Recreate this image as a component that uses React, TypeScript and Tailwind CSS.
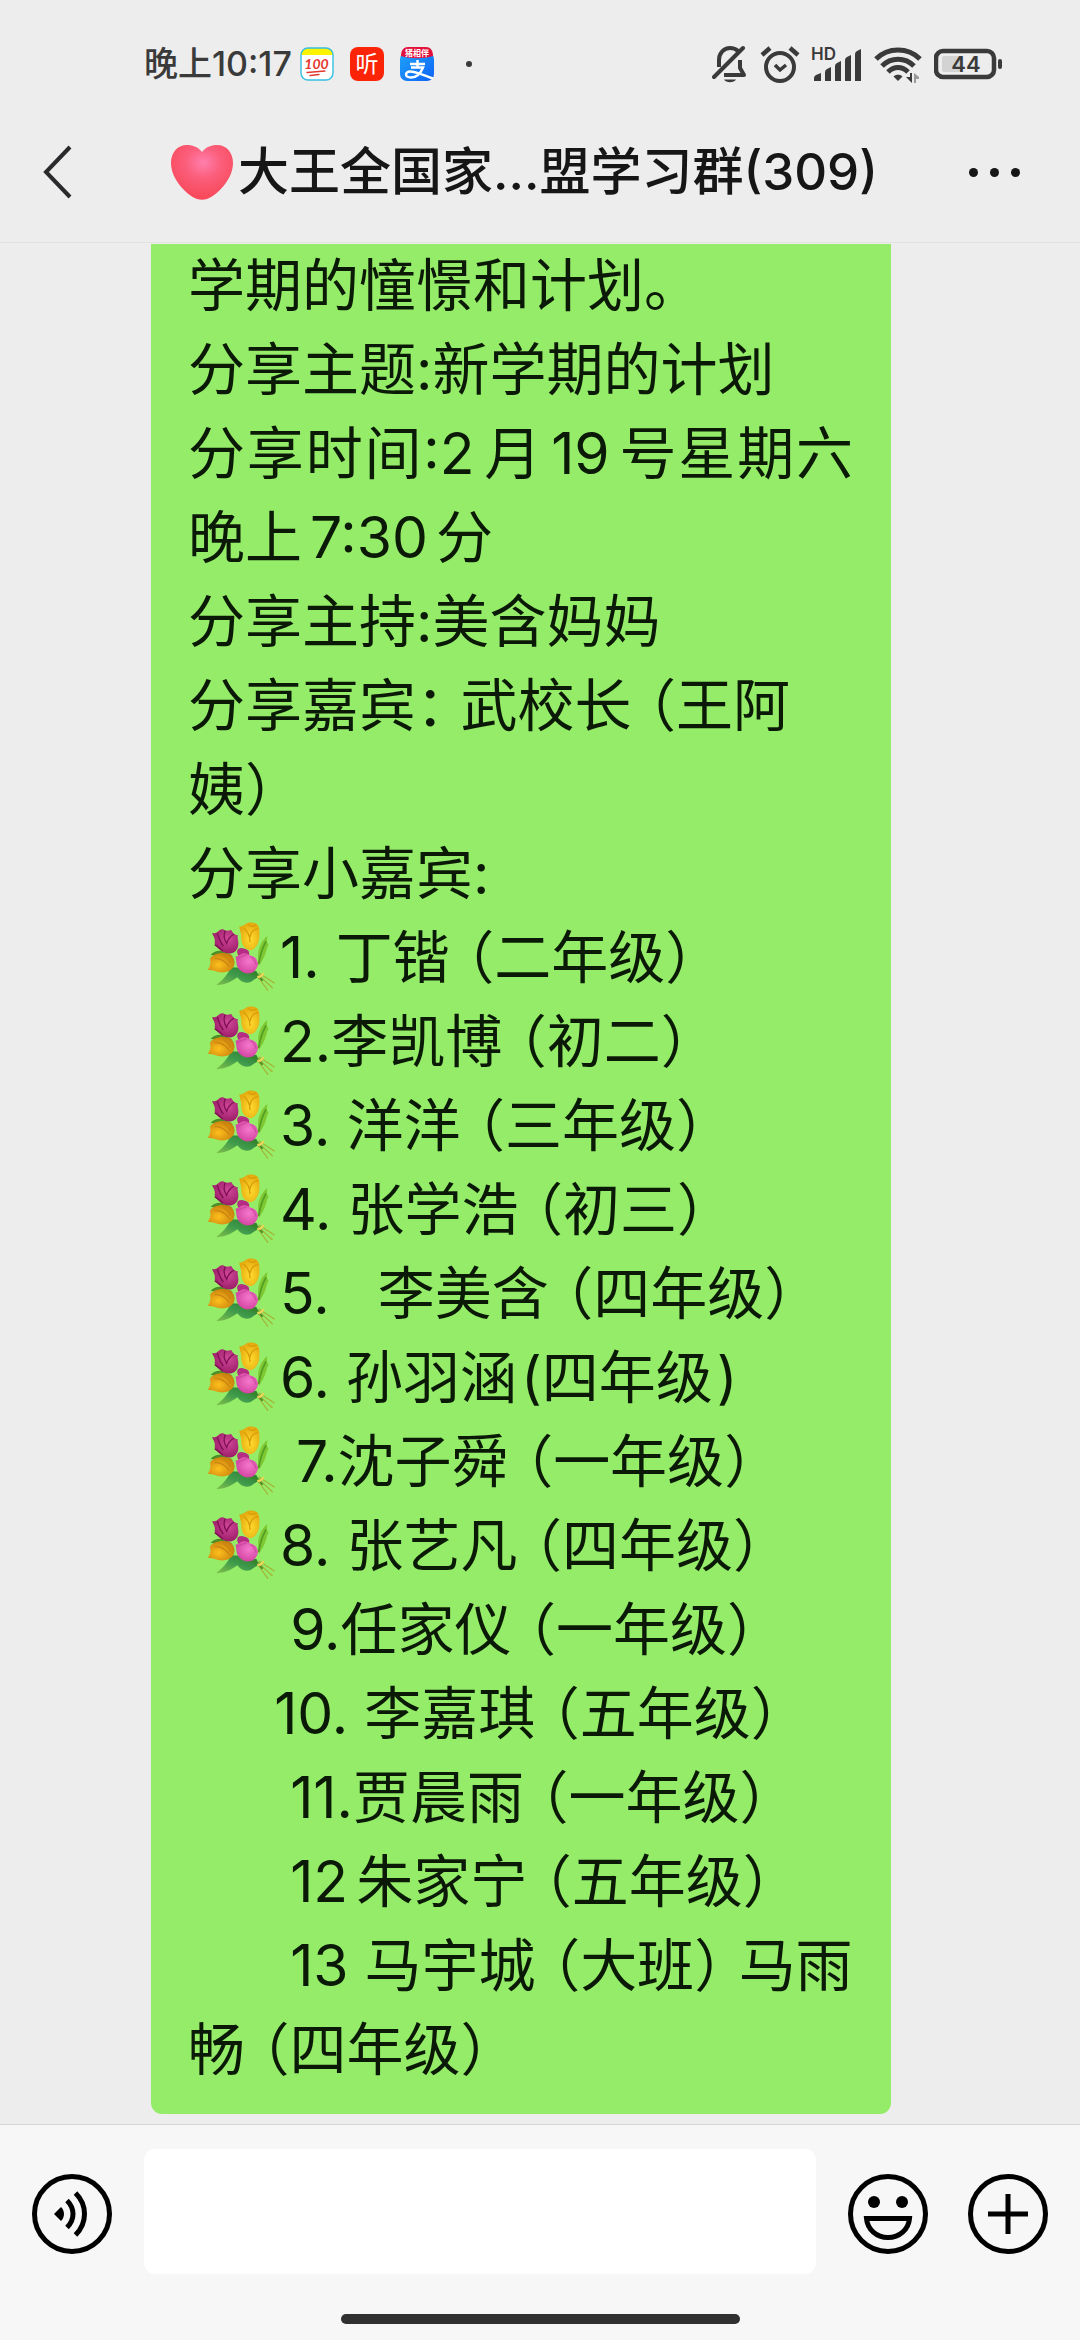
import React from "react";

const FONT = "font-[Inter,'Noto_Sans_CJK_SC',sans-serif]";

function ScoreIcon() {
  return (
    <svg viewBox="0 0 34 34" className="size-[34px] overflow-visible" aria-hidden="true">
      <rect x="1" y="1" width="32" height="32" rx="7" fill="#fff" />
      <path d="M1 8a7 7 0 0 1 7-7h18a7 7 0 0 1 7 7Z" fill="#fdf300" />
      <rect x="1" y="1" width="32" height="32" rx="7" fill="none" stroke="#35bfe0" strokeWidth="1.4" />
      <text x="16.500" y="22" textAnchor="middle" fontFamily="Lato, sans-serif" fontSize="14" fontStyle="italic" fontWeight="700" fill="#e5382c">100</text>
      <path d="M7 25.500 25 24M10 28.500 19 27.500" stroke="#e5382c" strokeWidth="1.300" fill="none" strokeLinecap="round" />
    </svg>
  );
}

function ListenIcon() {
  return (
    <svg viewBox="0 0 34 34" className="size-[34px] overflow-visible" aria-hidden="true">
      <rect width="34" height="34" rx="8" fill="#fb2407" />
      <text x="17" y="25" textAnchor="middle" fontFamily="'Noto Sans CJK SC', sans-serif" fontSize="23" fill="#fff">听</text>
    </svg>
  );
}

function PayIcon() {
  return (
    <svg viewBox="0 0 34 34" className="size-[34px] overflow-visible" aria-hidden="true">
      <defs>
        <linearGradient id="payBlue" x1="0" y1="0" x2="1" y2="1">
          <stop offset="0" stopColor="#1ea4fb" />
          <stop offset="1" stopColor="#0f62f5" />
        </linearGradient>
      </defs>
      <rect y="5" width="34" height="29" rx="7" fill="url(#payBlue)" />
      <path d="M1 9C1 3 4 0 8 0h18c4 0 7 3 7 9-9 3-23 3-32 0Z" fill="#e2103a" />
      <text x="17" y="9" textAnchor="middle" fontFamily="'Noto Sans CJK SC', sans-serif" fontSize="8" fontWeight="700" fill="#fff">猪相伴</text>
      <path d="M10 17h15M17.500 13v7M11 20.500h12c-2 5-6 10-12 10-7 0-6-6-1-6 6 0 14 4 23 7" fill="none" stroke="#fff" strokeWidth="2.400" />
    </svg>
  );
}

function StatusBar() {
  return (
    <div className="flex h-32 items-start justify-between pt-10 pr-19 pl-36 text-[#3a3a3a]">
      <div className="flex h-12 items-center">
        <span className="text-[34px] leading-12 font-medium">晚上10:17</span>
        <div className="ml-2 flex items-center gap-4">
          <ScoreIcon />
          <ListenIcon />
          <PayIcon />
        </div>
        <span className="ml-8 size-[6px] rounded-full bg-[#3a3a3a]" />
      </div>
      <div className="flex h-12 items-center gap-3">
        <svg viewBox="0 0 36 38" className="h-[38px] w-9" fill="none" stroke="currentColor" aria-label="静音">
          <path d="M7 22V15C7 8 12 3 18 3c3 0 6 1 8 3" strokeWidth="4" />
          <path d="M12 30h20l-4-7v-8" strokeWidth="4" strokeLinejoin="round" />
          <path d="M2 32 31 3" strokeWidth="4" strokeLinecap="round" />
          <path d="M12 34.500h12c-2 3.500-10 3.500-12 0Z" fill="currentColor" stroke="none" />
        </svg>
        <svg viewBox="0 0 40 38" className="h-[38px] w-10" fill="none" stroke="currentColor" strokeWidth="4" aria-label="闹钟">
          <circle cx="20" cy="22" r="14" />
          <path d="M15 20l5 5 6-5" strokeWidth="3.500" />
          <path d="M2 10 10 3M38 10 30 3" strokeWidth="4.500" />
        </svg>
        <svg viewBox="0 0 50 38" className="h-[38px] w-[50px] overflow-visible" fill="currentColor" aria-label="信号">
          <text x="-1" y="15" fontFamily="Inter, sans-serif" fontSize="17" fontWeight="600">HD</text>
          <path d="M2 36v-3q0-2 2-3l5-2v8Z" />
          <path d="M13 36V27q0-2 2-3l4-2v14Z" />
          <path d="M23 36V21q0-2 2-3l4-2v20Z" />
          <path d="M33 36V15q0-2 2-3l4-2v26Z" />
          <path d="M43 36V9q0-2 2-3l4-2v32Z" />
        </svg>
        <svg viewBox="0 0 48 38" className="h-[38px] w-12" fill="none" stroke="currentColor" strokeWidth="5" aria-label="无线网络">
          <path d="M2 14C14 2 34 2 46 14" />
          <path d="M8 21c9-9 23-9 32 0" />
          <path d="M14 27c6-6 14-6 20 0" />
          <path d="M19.500 31.500c2-2.500 7-2.500 9 0L24 36Z" fill="currentColor" stroke="none" />
          <path d="M32 32h4v-4h2v10Z" fill="currentColor" stroke="none" />
          <path d="M40 38V28l5 4v2h-3v4Z" fill="#9a9a9a" stroke="none" />
        </svg>
        <svg viewBox="0 0 70 32" className="h-8 w-[70px]" aria-label="电量 44">
          <rect x="2" y="3" width="58" height="26" rx="7" fill="none" stroke="currentColor" strokeWidth="4.500" />
          <rect x="8" y="8" width="19" height="16" rx="2" fill="#d3d3d3" />
          <rect x="64" y="11" width="4" height="10" rx="2" fill="currentColor" />
          <text x="32" y="24" textAnchor="middle" fontFamily="Inter, sans-serif" fontSize="22" fontWeight="600" fill="currentColor">44</text>
        </svg>
      </div>
    </div>
  );
}

function Heart() {
  return (
    <svg viewBox="0 0 64 56" className="mr-1 h-14 w-16" aria-label="爱心">
      <defs>
        <radialGradient id="heartFill" cx="0.520" cy="0.320" r="0.620">
          <stop offset="0" stopColor="#ff7fae" />
          <stop offset="0.450" stopColor="#fb5f7c" />
          <stop offset="1" stopColor="#f84a5c" />
        </radialGradient>
      </defs>
      <path d="M32 8C28 3 23 1 17 1 7 1 1 9 1 19c0 17 17 33 26 36 3 1 7 1 10 0C46 52 63 36 63 19 63 9 57 1 47 1c-6 0-11 2-15 7Z" fill="url(#heartFill)" />
    </svg>
  );
}

function Header() {
  return (
    <header className="shrink-0 border-b border-[#e2e2e2] bg-[#ededed]">
      <StatusBar />
      <div className="flex h-[114px] items-start justify-between px-9">
        <button type="button" aria-label="返回" className="flex h-22 w-18 items-center pl-1">
          <svg viewBox="0 0 34 54" className="h-[54px] w-[34px]" fill="none" stroke="#2a2a2c" strokeWidth="4">
            <path d="M30 2 6 27l24 25" />
          </svg>
        </button>
        <h1 className="flex h-22 items-center text-[51px] font-medium whitespace-nowrap text-[#161616]">
          <Heart />
          大王全国家...盟学习群(309)
        </h1>
        <button type="button" aria-label="更多" className="flex h-22 w-26 items-center justify-end gap-3 pr-6">
          <span className="size-[9px] shrink-0 rounded-full bg-[#161616]" />
          <span className="size-[9px] shrink-0 rounded-full bg-[#161616]" />
          <span className="size-[9px] shrink-0 rounded-full bg-[#161616]" />
        </button>
      </div>
    </header>
  );
}

function BouquetDefs() {
  return (
    <svg className="absolute size-0" aria-hidden="true">
      <defs>
        <radialGradient id="bqMagenta" cx="0.600" cy="0.400" r="0.700">
          <stop offset="0" stopColor="#d0479a" />
          <stop offset="1" stopColor="#94175f" />
        </radialGradient>
        <radialGradient id="bqYellow" cx="0.550" cy="0.600" r="0.700">
          <stop offset="0" stopColor="#ffdc2e" />
          <stop offset="1" stopColor="#e0a008" />
        </radialGradient>
        <radialGradient id="bqOrange" cx="0.400" cy="0.600" r="0.700">
          <stop offset="0" stopColor="#fcbf1c" />
          <stop offset="1" stopColor="#c47a0c" />
        </radialGradient>
        <radialGradient id="bqPink" cx="0.600" cy="0.400" r="0.700">
          <stop offset="0" stopColor="#f578cc" />
          <stop offset="1" stopColor="#cf3d9b" />
        </radialGradient>
        <linearGradient id="bqLeaf" x1="0" y1="1" x2="1" y2="0">
          <stop offset="0" stopColor="#7fc04a" />
          <stop offset="0.500" stopColor="#3f9a4c" />
          <stop offset="1" stopColor="#2c7a2a" />
        </linearGradient>
        <symbol id="bouquet" viewBox="42 42 228 228">
          <path d="M232 96c-16 14-26 32-28 56l2 34c10-14 18-28 22-42 4-12 2-14 8-22-6-4-6-14-4-26Z" fill="#7fc832" />
          <path d="M228 112c-12 22-18 42-22 68" stroke="#4f9d22" strokeWidth="5" fill="none" />
          <path d="M62 152c10-12 26-14 42-10l24 14-8 10Z" fill="#4c8e27" />
          <path d="M122 190c-8 22-24 38-44 54 34-2 50-14 64-24 10 14 24 20 40 14 10-6 16-12 24-16l-6-16-32-10Z" fill="url(#bqLeaf)" />
          <path d="M182 206c16 2 28 12 36 24" stroke="#35872c" strokeWidth="9" fill="none" />
          <path d="M206 206 254 238M204 212 248 252M202 216 234 260" stroke="#a5b235" strokeWidth="3.500" fill="none" />
          <path d="M202 218c6 2 14-2 19-11" stroke="#f0d55a" strokeWidth="6" fill="none" />
          <path d="M146 156c-12-20 2-28 18-22 14 4 16 12 12 22Z" fill="#b52c83" />
          <path d="M148 68c10 0 16-8 26-12 12-2 24 0 30 8 6 12 4 24 4 38-2 18-12 34-26 36-18 0-28-18-28-36 0-14-4-20-6-34Z" fill="url(#bqYellow)" />
          <path d="M160 72c14 10 20 22 20 42M204 74c-14 2-22 12-24 26M174 62c8 6 16 6 24 2" stroke="#d99b0a" strokeWidth="4" fill="none" />
          <path d="M66 88c6 0 12 0 16-4 6-6 12-10 18-8 6 6 14 4 24 2 4 8 10 16 20 16-4 8 4 18 0 34-4 14-16 22-30 20-18-2-32-14-40-30 2-10 0-16-8-30Z" fill="url(#bqMagenta)" />
          <path d="M82 88c4 12 6 24 18 38M106 80c-6 12-4 26 4 38 4-14 12-22 22-28M98 140c-8-6-14-12-24-18" stroke="#7e0f52" strokeWidth="4" fill="none" />
          <path d="M60 164c12-16 36-20 58-14 14 8 20 24 12 40-10 14-28 18-46 14-12-4-20-6-30-6 4-10 10-18 6-34Z" fill="url(#bqOrange)" />
          <path d="M74 164c18-2 34 10 44 24M98 152c10 6 18 14 24 26" stroke="#c98512" strokeWidth="4" fill="none" />
          <path d="M136 158c8 0 12-6 22-10 14-2 20 6 26 8 12 2 18 10 20 22 0 16-12 28-26 30-22 2-36-14-38-28-2-8 0-14-4-22Z" fill="url(#bqPink)" />
          <path d="M142 166c8-8 20-10 28-14M182 158c10 4 14 14 16 24" stroke="#cb4aa2" strokeWidth="3.500" fill="none" />
        </symbol>
      </defs>
    </svg>
  );
}

function Bouquet() {
  return (
    <svg className="mb-3 inline-block size-[76px] align-middle" role="img" aria-label="花束">
      <use href="#bouquet" />
    </svg>
  );
}

/* Full-width marks use their half-width forms plus a fixed side gap. */
function Open() {
  return <span className="ml-4 [font-feature-settings:'halt']">（</span>;
}
function Close() {
  return <span className="mr-4 [font-feature-settings:'halt']">）</span>;
}
function Colon() {
  return <span className="mr-4 [font-feature-settings:'halt']">：</span>;
}

type Guest = { lead: string; flower?: boolean; label: React.ReactNode; grade: string; half?: boolean };

const guests: Guest[] = [
  { lead: " ", flower: true, label: "1. 丁锴", grade: "二年级" },
  { lead: " ", flower: true, label: "2.李凯博", grade: "初二" },
  { lead: " ", flower: true, label: "3. 洋洋", grade: "三年级" },
  { lead: " ", flower: true, label: "4. 张学浩", grade: "初三" },
  { lead: " ", flower: true, label: "5.   李美含", grade: "四年级" },
  { lead: " ", flower: true, label: "6. 孙羽涵", grade: "四年级", half: true },
  { lead: " ", flower: true, label: " 7.沈子舜", grade: "一年级" },
  { lead: " ", flower: true, label: "8. 张艺凡", grade: "四年级" },
  { lead: "      ", label: "9.任家仪", grade: "一年级" },
  { lead: "     ", label: "10. 李嘉琪", grade: "五年级" },
  { lead: "      ", label: "11.贾晨雨", grade: "一年级" },
  { lead: "      ", label: <><span className="mr-2">12</span>朱家宁</>, grade: "五年级" },
];

function Message() {
  return (
    <article className="mr-[189px] ml-[151px] rounded-b-[11px] bg-[#95ec69] pr-[26px] pb-[22px] pl-[37px] text-[57px] leading-[84px] whitespace-pre-wrap text-[#0b1a06]">
      <p>学期的憧憬和计划。</p>
      <p>分享主题:新学期的计划</p>
      <p className="pr-3 text-justify">
        分享时间:<span className="mr-2">2</span>月<span className="mx-2">19</span>号星期六晚上<span className="mx-2">7:30</span>分
      </p>
      <p>分享主持:美含妈妈</p>
      <p>
        分享嘉宾<Colon />武校长<Open />王阿姨<Close />
      </p>
      <p>分享小嘉宾:</p>
      {guests.map((g, i) => (
        <p key={i} className={g.flower ? "h-[84px]" : "h-[84px] indent-1.5"}>
          {g.lead}
          {g.flower && <Bouquet />}
          {g.label}
          {g.half ? <span className="ml-1">(</span> : <Open />}
          {g.grade}
          {g.half ? <span className="ml-1">)</span> : <Close />}
        </p>
      ))}
      <p className="indent-1.5">
        {"      13 马宇城"}<Open />大班<Close />马雨畅<Open />四年级<Close />
      </p>
    </article>
  );
}

function Footer() {
  return (
    <footer className="shrink-0 border-t border-[#d5d5d5] bg-[#f7f7f7] px-8 pt-6 pb-4">
      <div className="flex items-center">
        <button type="button" aria-label="语音输入" className="pt-1">
          <svg viewBox="0 0 80 80" className="size-20" fill="none" stroke="#000" strokeWidth="5">
            <circle cx="40" cy="40" r="37.500" />
            <path d="M22 40 29 33c4 4 4 10 0 14Z" fill="#000" stroke="none" />
            <path d="M35 26.500c8 8 8 19 0 27M43.500 19c12 12 12 30 0 42" />
          </svg>
        </button>
        <input aria-label="消息" className="mx-8 h-[125px] min-w-0 flex-1 rounded-[11px] bg-white px-6 text-[50px] outline-none" />
        <button type="button" aria-label="表情" className="mr-10 pt-1">
          <svg viewBox="0 0 80 80" className="size-20" fill="none" stroke="#000" strokeWidth="5">
            <circle cx="40" cy="40" r="37.500" />
            <circle cx="26" cy="28" r="6" fill="#000" stroke="none" />
            <circle cx="54" cy="28" r="6" fill="#000" stroke="none" />
            <path d="M18.500 44.500h43c-1 11-10 19-21.500 19s-20.500-8-21.500-19Z" />
          </svg>
        </button>
        <button type="button" aria-label="更多功能" className="pt-1">
          <svg viewBox="0 0 80 80" className="size-20" fill="none" stroke="#000" strokeWidth="5">
            <circle cx="40" cy="40" r="37.500" />
            <path d="M20 40h40M40 20v40" />
          </svg>
        </button>
      </div>
      <div className="mx-auto mt-10 h-[10px] w-[399px] rounded-full bg-[#303030]" />
    </footer>
  );
}

export default function App() {
  return (
    <div className={`flex h-screen flex-col bg-[#ededed] ${FONT}`}>
      <BouquetDefs />
      <Header />
      <main className="flex min-h-0 flex-1 flex-col justify-end overflow-hidden pb-[10px]">
        <Message />
      </main>
      <Footer />
    </div>
  );
}
